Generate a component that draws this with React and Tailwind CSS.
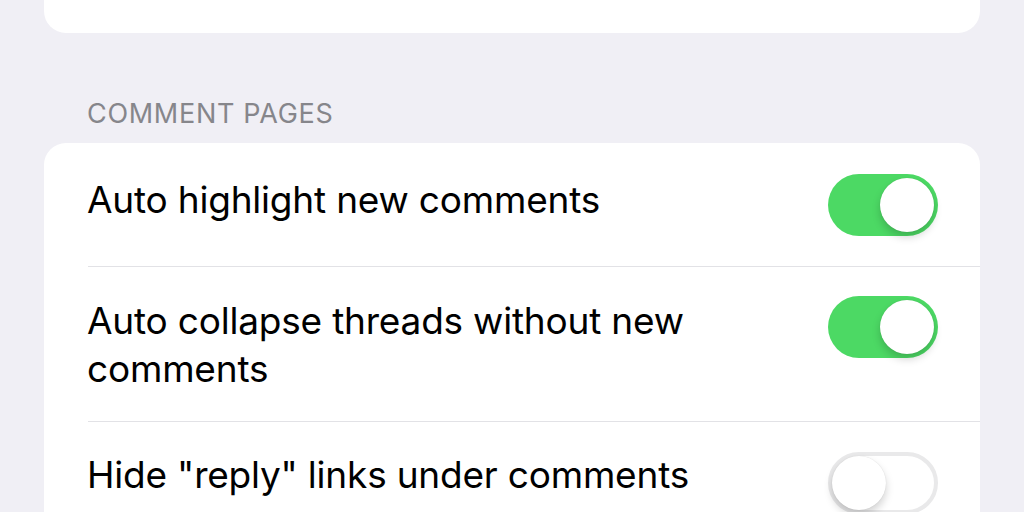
import React from 'react';

const Toggle = ({ on }) => (
  <div
    className={`relative h-[62px] w-[110px] shrink-0 rounded-full ${
      on ? 'bg-[#4cd964]' : 'bg-white border-[4px] border-[#e9e9ea]'
    }`}
  >
    <div
      className={`absolute h-[54px] w-[54px] rounded-full bg-white shadow-[0_5px_8px_rgba(0,0,0,0.18),0_0_1px_rgba(0,0,0,0.15)] ${
        on ? 'top-[4px] right-[4px]' : 'top-[0px] left-[0px]'
      }`}
    />
  </div>
);

const rows = [
  { label: 'Auto highlight new comments', on: true, h: 'h-[123px]', pt: 'pt-[33px]', tp: 'pt-[31px]' },
  { label: 'Auto collapse threads without new comments', on: true, h: 'h-[154px]', pt: 'pt-[30px]', tp: 'pt-[29px]' },
  { label: 'Hide "reply" links under comments', on: false, h: 'h-[123px]', pt: 'pt-[29px]', tp: 'pt-[30px]' },
];

export default function App() {
  return (
    <div className="h-[512px] w-[1024px] overflow-hidden bg-[#f0eff5] font-['Inter',sans-serif]">
      <div className="mx-[44px] h-[33px] rounded-b-[22px] bg-white" />

      {/* Section header */}
      <div className="px-[87px] pt-[63px] pb-[12px] text-[27px] leading-[35px] uppercase tracking-[0.7px] text-[#86868b]">
        Comment pages
      </div>

      <div className="mx-[44px] rounded-t-[22px] bg-white">
        {rows.map((r, i) => (
          <div key={i} className={`ml-[44px] ${i < rows.length - 1 ? 'border-b border-[#e2e2e6]' : ''}`}>
            <div className={`flex items-start justify-between pr-[42px] ${r.h}`}>
              <div className={`${r.pt} -ml-[1px] max-w-[620px] text-[37px] leading-[48px] text-black tracking-[-0.2px]`}>
                {r.label}
              </div>
              <div className={r.tp}>
                <Toggle on={r.on} />
              </div>
            </div>
          </div>
        ))}
      </div>
    </div>
  );
}
